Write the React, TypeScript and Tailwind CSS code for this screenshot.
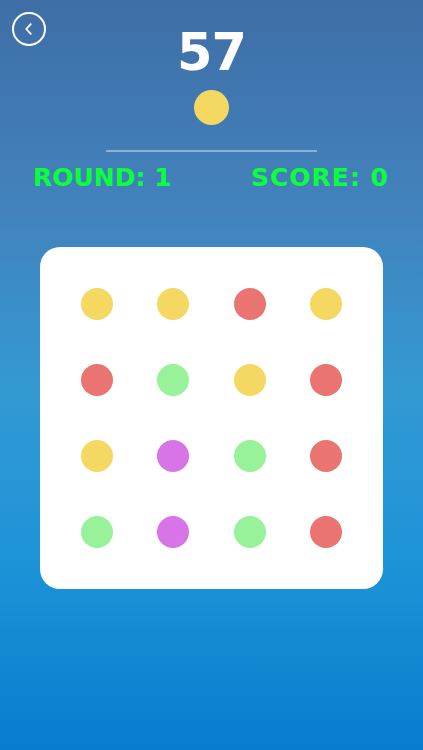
import React from "react";

const DOTS = [
  "#f4d862", "#f4d862", "#e97471", "#f4d862",
  "#e97471", "#97f29a", "#f4d862", "#e97471",
  "#f4d862", "#d873e8", "#97f29a", "#e97471",
  "#97f29a", "#d873e8", "#97f29a", "#e97471",
];

export default function App() {
  return (
    <div className="relative w-[423px] h-[750px] overflow-hidden bg-[linear-gradient(to_bottom,#3f6ea6_0%,#4283bd_28%,#3399d3_52%,#1c93d8_76%,#087ccd_100%)] font-['DejaVu_Sans',sans-serif]">
      {/* back button */}
      <button className="absolute left-[12px] top-[12px] w-[34px] h-[34px] rounded-full border-2 border-white flex items-center justify-center">
        <svg width="14" height="14" viewBox="0 0 14 14" fill="none">
          <path
            d="M8.8 2.2L4.2 7l4.6 4.8"
            stroke="#ffffff"
            strokeWidth={1.8}
            strokeLinecap="round"
            strokeLinejoin="round"
          />
        </svg>
      </button>

      <div className="flex flex-col items-center pt-[27px]">
        <div className="text-white font-bold text-[51px] leading-none tracking-[-1px]">
          57
        </div>
        <div className="mt-[12px] w-[35px] h-[35px] rounded-full bg-[#f4d862]" />
        <div className="mt-[25px] w-[211px] h-[2px] bg-white/40" />
      </div>

      <div className="mt-[13px] flex justify-between pl-[33px] pr-[34px] text-[#0bff3a] font-bold text-[25px] leading-none">
        <span>ROUND: 1</span>
        <span className="tracking-[1px]">SCORE: 0</span>
      </div>

      <div className="mt-[57px] mx-[40px] h-[342px] rounded-[20px] bg-white grid grid-cols-4 px-[19px] py-[19px]">
        {DOTS.map((c, i) => (
          <div key={`dot-${i}`} className="flex items-center justify-center h-[76px]">
            <div className="w-[32px] h-[32px] rounded-full" style={{ backgroundColor: c }} />
          </div>
        ))}
      </div>
    </div>
  );
}
